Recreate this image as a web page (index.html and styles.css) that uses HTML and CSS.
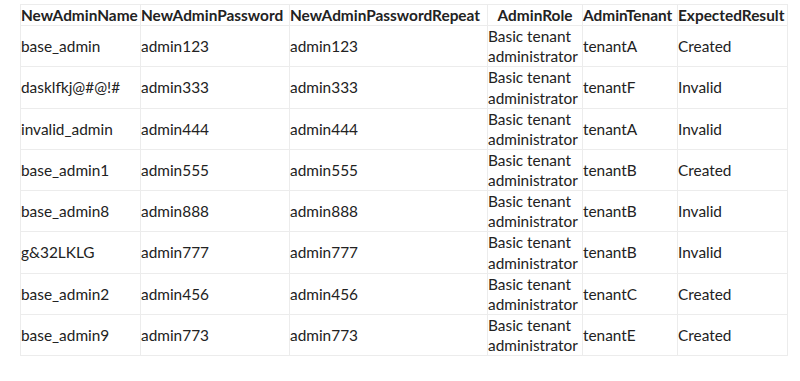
FILE: index.html
```html
<!DOCTYPE html>
<html lang="en">
<head>
    <meta charset="UTF-8">
    <title>New Admin Test Data</title>
    <link rel="stylesheet" href="styles.css">
</head>
<body>
    <table class="data-table">
        <colgroup>
            <col class="col-name">
            <col class="col-pass">
            <col class="col-repeat">
            <col class="col-role">
            <col class="col-tenant">
            <col class="col-result">
        </colgroup>
        <thead>
            <tr>
                <th>NewAdminName</th>
                <th>NewAdminPassword</th>
                <th>NewAdminPasswordRepeat</th>
                <th>AdminRole</th>
                <th>AdminTenant</th>
                <th>ExpectedResult</th>
            </tr>
        </thead>
        <tbody>
            <tr><td>base_admin</td><td>admin123</td><td>admin123</td><td>Basic tenant administrator</td><td>tenantA</td><td>Created</td></tr>
            <tr><td>dasklfkj@#@!#</td><td>admin333</td><td>admin333</td><td>Basic tenant administrator</td><td>tenantF</td><td>Invalid</td></tr>
            <tr><td>invalid_admin</td><td>admin444</td><td>admin444</td><td>Basic tenant administrator</td><td>tenantA</td><td>Invalid</td></tr>
            <tr><td>base_admin1</td><td>admin555</td><td>admin555</td><td>Basic tenant administrator</td><td>tenantB</td><td>Created</td></tr>
            <tr><td>base_admin8</td><td>admin888</td><td>admin888</td><td>Basic tenant administrator</td><td>tenantB</td><td>Invalid</td></tr>
            <tr><td>g&amp;32LKLG</td><td>admin777</td><td>admin777</td><td>Basic tenant administrator</td><td>tenantB</td><td>Invalid</td></tr>
            <tr><td>base_admin2</td><td>admin456</td><td>admin456</td><td>Basic tenant administrator</td><td>tenantC</td><td>Created</td></tr>
            <tr><td>base_admin9</td><td>admin773</td><td>admin773</td><td>Basic tenant administrator</td><td>tenantE</td><td>Created</td></tr>
        </tbody>
    </table>
</body>
</html>
```

FILE: styles.css
```css
* {
    margin: 0;
    padding: 0;
    box-sizing: border-box;
}

body {
    padding: 4px 20px;
    background: #fff;
    color: #222;
    font-family: 'Lato', 'Open Sans', sans-serif;
    font-size: 15.4px;
}

.data-table {
    width: 767px;
    table-layout: fixed;
    border-collapse: collapse;
}

.col-name { width: 120px; }
.col-pass { width: 149px; }
.col-repeat { width: 198px; }
.col-role { width: 95px; }
.col-tenant { width: 95px; }
.col-result { width: 110px; }

.data-table th,
.data-table td {
    border: 1px solid #ececec;
    padding: 0;
    line-height: 20.125px;
    vertical-align: middle;
    text-align: left;
}

.data-table th {
    font-weight: 700;
    white-space: nowrap;
    overflow: visible;
}

.data-table th:nth-child(4) {
    text-align: center;
}
```
